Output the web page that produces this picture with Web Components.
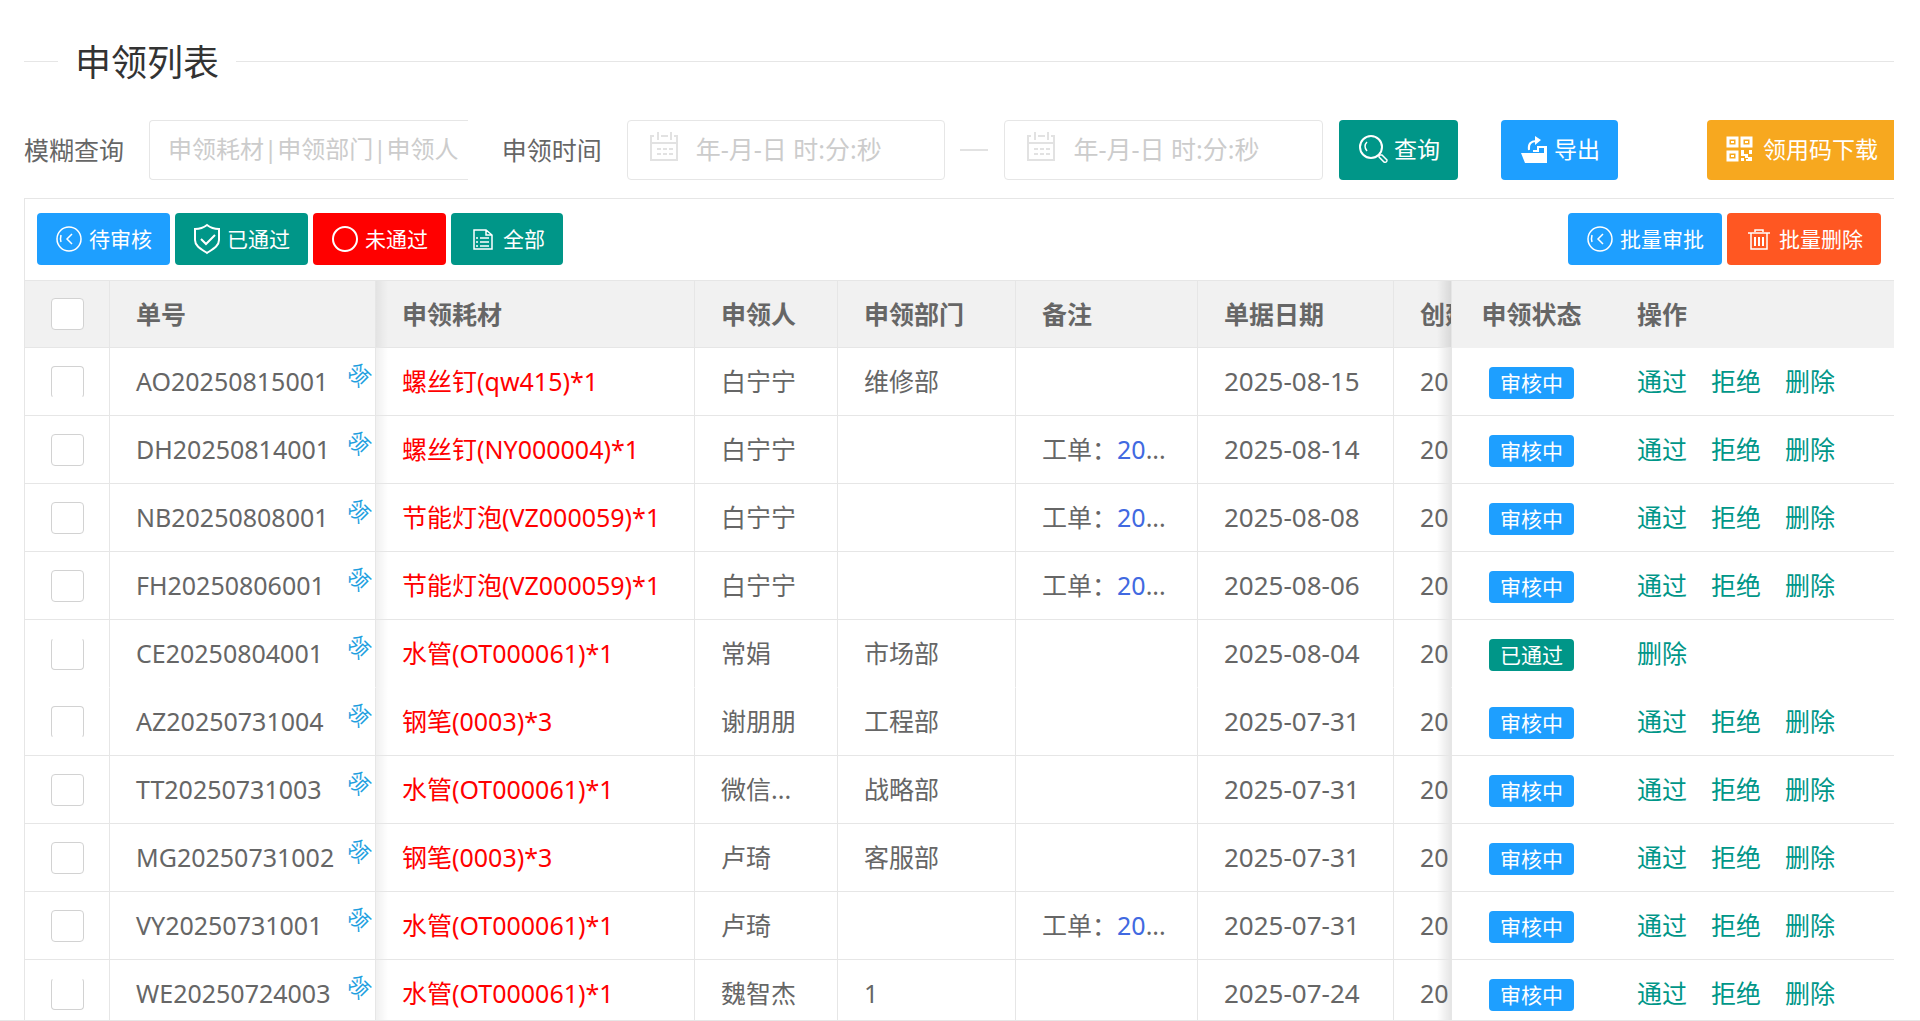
<!DOCTYPE html>
<html lang="zh-CN">
<head>
<meta charset="UTF-8">
<meta name="viewport" content="width=device-width, initial-scale=1.0">
<title>申领列表</title>
<style>
    body {
        margin: 0;
        background: #fff;
        color: #666;
        font: 25px/32px "Noto Sans", "Noto Sans CJK SC", sans-serif;
    }
</style>
</head>
<body>
<requisition-page></requisition-page>

<script>
const ICONS = {
    back: `<circle cx="13" cy="13" r="12"/><path d="M16 8l-5 5 5 5M5 9q-1 4 0 7"/>`,
    shield: `<path stroke-width="2" d="M13-1q5 4 12 4v11c0 6-6 9-12 13C7 23 1 20 1 14V3q7 0 12-4zM7 13l5 5 9-9"/>`,
    circle: `<circle cx="13" cy="13" r="12" stroke-width="2"/>`,
    doc: `<path d="M4 4h12l6 5v14H4zM16 4v5h6M10 12h9M10 16h9M10 20h9M6 12h2M6 16h2M6 20h2"/>`,
    search: `<circle cx="12" cy="12" r="11" stroke-width="2"/><path d="M8 16q-4-5 0-9M20 20l3 0 5 5q0 3-3 2l-5-5z"/>`,
    share: `<path fill="currentColor" stroke="none" d="M0 17h23V10h3v17H4zM14 0l6 4-6 5z"/><path stroke-width="2" d="M8 14c-1-6 2-9 7-9M12 15h5v-4h8v8"/>`,
    qrcode: `<path stroke-width="3" d="M1 2h9v8H1zM15 2h9v8h-9zM1 16h9v8H1z"/><path fill="currentColor" stroke="none" d="M4 5h3v2H4zM18 5h3v2h-3zM4 19h3v2H4zM14 14h3v4h4v4h-3v-2h-4zM22 14h3v4h-3zM14 22h3v3h-3zM21 21h4v4h-6v-2h2z"/>`,
    trash: `<path d="M2 7h22M9 6V4h8v2M5 7v16h16V7"/><path stroke-width="2" d="M9 11v9M13 11v9M17 11v9"/>`,
    date: `<path stroke-width="2" d="M4 4H1v24h26V4h-3M11 4h7M1 11h26M8 0v8M21 0v8"/><path stroke-width="2" stroke-dasharray="4 2" d="M7 17h16M7 22h16"/>`
};

const ROWS = [
    { no: "AO20250815001", goods: "螺丝钉(qw415)*1", user: "白宁宁", dept: "维修部", date: "2025-08-15", edge: "no-bottom" },
    { no: "DH20250814001", goods: "螺丝钉(NY000004)*1", user: "白宁宁", order: true, date: "2025-08-14" },
    { no: "NB20250808001", goods: "节能灯泡(VZ000059)*1", user: "白宁宁", order: true, date: "2025-08-08" },
    { no: "FH20250806001", goods: "节能灯泡(VZ000059)*1", user: "白宁宁", order: true, date: "2025-08-06" },
    { no: "CE20250804001", goods: "水管(OT000061)*1", user: "常娟", dept: "市场部", date: "2025-08-04", passed: true, edge: "no-top" },
    { no: "AZ20250731004", goods: "钢笔(0003)*3", user: "谢朋朋", dept: "工程部", date: "2025-07-31", edge: "no-bottom" },
    { no: "TT20250731003", goods: "水管(OT000061)*1", user: "微信...", dept: "战略部", date: "2025-07-31" },
    { no: "MG20250731002", goods: "钢笔(0003)*3", user: "卢琦", dept: "客服部", date: "2025-07-31" },
    { no: "VY20250731001", goods: "水管(OT000061)*1", user: "卢琦", order: true, date: "2025-07-31" },
    { no: "WE20250724003", goods: "水管(OT000061)*1", user: "魏智杰", dept: "1", date: "2025-07-24", edge: "no-top" }
];

class AppIcon extends HTMLElement {
    constructor() {
        super();
        this.attachShadow({ mode: "open" });
    }

    connectedCallback() {
        this.shadowRoot.innerHTML = `
        <style>
            :host { display: block; flex: none; width: 26px; height: 26px; }
            svg { display: block; width: 100%; height: 100%; overflow: visible; }
        </style>
        <svg viewBox="0 0 ${this.getAttribute("box") || "26 26"}" fill="none" stroke="currentColor" stroke-width="1.500" aria-hidden="true">${ICONS[this.getAttribute("name")]}</svg>`;
    }
}

class AppButton extends HTMLElement {
    constructor() {
        super();
        this.attachShadow({ mode: "open" }).innerHTML = `
        <style>
            :host { display: block; flex: none; }
            button {
                display: flex;
                align-items: center;
                gap: 7px;
                height: 60px;
                padding: 0 18px 2px 20px;
                border: 0;
                border-radius: 4px;
                background: var(--btn, #009688);
                color: #fff;
                font: inherit;
                font-size: 23px;
                white-space: nowrap;
                cursor: pointer;
            }
            :host([small]) button { height: 52px; padding: 0 18px 0 19px; font-size: 21px; }
            :host([flush]) button { border-radius: 4px 0 0 4px; padding-right: 16px; gap: 10px; }
            button:hover { opacity: 0.8; }
        </style>
        <button type="button"><slot name="icon"></slot><slot></slot></button>`;
    }
}

class TextField extends HTMLElement {
    constructor() {
        super();
        this.attachShadow({ mode: "open" });
    }

    connectedCallback() {
        const icon = this.getAttribute("icon");
        this.shadowRoot.innerHTML = `
        <style>
            :host { display: flex; align-items: center; min-width: 0; }
            label { flex: none; width: 125px; }
            .box {
                flex: 1;
                min-width: 0;
                display: flex;
                box-sizing: border-box;
                height: 60px;
                border: 1px solid #e6e6e6;
                border-radius: 4px;
            }
            :host([cut]) .box { border-right: 0; border-radius: 4px 0 0 4px; }
            :host([cut]) input { font-size: 24px; }
            app-icon { width: 28px; height: 28px; margin: 11px 0 0 22px; color: #e2e2e2; }
            input {
                flex: 1;
                min-width: 0;
                padding: 0 0 2px 18px;
                border: 0;
                outline: 0;
                background: none;
                color: #666;
                font: inherit;
            }
            input::placeholder { color: #ccc; opacity: 1; }
        </style>
        ${this.hasAttribute("label") ? `<label for="field">${this.getAttribute("label")}</label>` : ""}
        <div class="box">
            ${icon ? `<app-icon name="${icon}" box="28 28"></app-icon>` : ""}
            <input id="field" type="text" placeholder="${this.getAttribute("placeholder")}" aria-label="${this.getAttribute("label") || "结束时间"}">
        </div>`;
    }
}

class SearchBar extends HTMLElement {
    constructor() {
        super();
        this.attachShadow({ mode: "open" }).innerHTML = `
        <style>
            :host { display: flex; align-items: center; }
            .keyword { flex: 443; }
            .start { flex: 443; margin-left: 34px; }
            .end { flex: 318; }
            .line { flex: none; width: 28px; height: 2px; margin: 0 16px 0 15px; background: #e2e2e2; }
            .query { margin-left: 16px; }
            .export { margin-left: 43px; }
            .code { margin-left: 89px; }
            .query app-icon { width: 28px; height: 28px; }
        </style>
        <text-field class="keyword" cut label="模糊查询" placeholder="申领耗材|申领部门|申领人"></text-field>
        <text-field class="start" icon="date" label="申领时间" placeholder="年-月-日 时:分:秒"></text-field>
        <span class="line"></span>
        <text-field class="end" icon="date" placeholder="年-月-日 时:分:秒"></text-field>
        <app-button class="query"><app-icon slot="icon" name="search" box="28 28"></app-icon>查询</app-button>
        <app-button class="export" style="--btn: #1e9fff"><app-icon slot="icon" name="share"></app-icon>导出</app-button>
        <app-button class="code" flush style="--btn: #f7a81f"><app-icon slot="icon" name="qrcode"></app-icon>领用码下载</app-button>`;
    }
}

class TableToolbar extends HTMLElement {
    constructor() {
        super();
        this.attachShadow({ mode: "open" }).innerHTML = `
        <style>
            :host { display: flex; gap: 5px; padding: 14px 13px 15px 12px; }
            .right { margin-left: auto; }
        </style>
        <app-button small style="--btn: #1e9fff"><app-icon slot="icon" name="back"></app-icon>待审核</app-button>
        <app-button small><app-icon slot="icon" name="shield"></app-icon>已通过</app-button>
        <app-button small style="--btn: #f00"><app-icon slot="icon" name="circle"></app-icon>未通过</app-button>
        <app-button small><app-icon slot="icon" name="doc"></app-icon>全部</app-button>
        <app-button small class="right" style="--btn: #1e9fff"><app-icon slot="icon" name="back"></app-icon>批量审批</app-button>
        <app-button small style="--btn: #ff5722"><app-icon slot="icon" name="trash"></app-icon>批量删除</app-button>`;
    }
}

class StatusBadge extends HTMLElement {
    constructor() {
        super();
        this.attachShadow({ mode: "open" }).innerHTML = `
        <style>
            :host {
                display: inline-block;
                padding: 0 11px;
                border-radius: 4px;
                background: #1e9fff;
                color: #fff;
                font-size: 21px;
                line-height: 32px;
                vertical-align: middle;
            }
            :host([passed]) { background: #009688; }
        </style>
        <slot></slot>`;
    }
}

class RequisitionTable extends HTMLElement {
    constructor() {
        super();
        this.attachShadow({ mode: "open" });
    }

    connectedCallback() {
        this.render();
    }

    renderRow(row) {
        const ops = row.passed ? ["删除"] : ["通过", "拒绝", "删除"];
        return `
        <tr class="${row.passed ? "no-line" : ""}">
            <td class="check"><input type="checkbox" class="${row.edge || ""}" aria-label="${row.no}"></td>
            <td class="no">${row.no}<span class="mark">领</span></td>
            <td class="goods">${row.goods}</td>
            <td>${row.user}</td>
            <td>${row.dept || ""}</td>
            <td>${row.order ? `工单：<a href="#">20</a>...` : ""}</td>
            <td class="date">${row.date}</td>
            <td class="created">20</td>
            <td class="state"><status-badge ${row.passed ? "passed" : ""}>${row.passed ? "已通过" : "审核中"}</status-badge></td>
            <td class="ops"><div>${ops.map(op => `<a href="#">${op}</a>`).join("")}</div></td>
        </tr>`;
    }

    render() {
        this.shadowRoot.innerHTML = `
        <style>
            :host { display: block; }
            table { width: 100%; table-layout: fixed; border-collapse: separate; border-spacing: 0; }
            th, td {
                box-sizing: border-box;
                height: 68px;
                padding: 0 0 2px 26px;
                border: solid #e6e6e6;
                border-width: 0 1px 1px 0;
                text-align: left;
                white-space: nowrap;
                overflow: hidden;
            }
            th { padding-bottom: 0; border-top-width: 1px; background: #f1f1f1; font-weight: 700; }
            .no-line td { border-bottom-color: transparent; }
            .check { padding: 0; text-align: center; }
            input {
                appearance: none;
                box-sizing: border-box;
                display: block;
                width: 33px;
                height: 32px;
                margin: 0 auto;
                border: 1px solid #d2d2d2;
                border-radius: 4px;
                background: #fff;
            }
            .no-bottom { border-bottom-color: transparent; }
            .no-top { border-top-color: transparent; }
            .no { position: relative; }
            .mark {
                position: absolute;
                top: 15px;
                right: 5px;
                width: 22px;
                color: #1e9fdf;
                font-size: 22px;
                line-height: 22px;
                transform: rotate(45deg);
            }
            .goods { color: #f00; }
            .date { font-size: 26px; }
            a { color: #4169e1; text-decoration: none; }
            th.goods { color: inherit; }
            .goods { background-image: linear-gradient(90deg, rgba(0, 0, 0, 0.06), transparent 12px); }
            .created { background-image: linear-gradient(270deg, rgba(0, 0, 0, 0.1), transparent 14px); }
            .state { padding: 0; border-right: 0; text-align: center; }
            .ops { border-right: 0; }
            th.state, th.ops { border-bottom-color: transparent; }
            .ops div { display: flex; gap: 24px; }
            .ops a { color: #009688; }
        </style>
        <table>
            <colgroup>
                <col style="width: 85px"><col style="width: 266px"><col>
                <col style="width: 143px"><col style="width: 178px"><col style="width: 182px">
                <col style="width: 196px"><col style="width: 58px"><col style="width: 159px">
                <col style="width: 283px">
            </colgroup>
            <thead>
                <tr>
                    <th class="check"><input type="checkbox" aria-label="全选"></th>
                    <th>单号</th>
                    <th class="goods">申领耗材</th>
                    <th>申领人</th>
                    <th>申领部门</th>
                    <th>备注</th>
                    <th>单据日期</th>
                    <th class="created">创建</th>
                    <th class="state">申领状态</th>
                    <th class="ops">操作</th>
                </tr>
            </thead>
            <tbody>${ROWS.map(row => this.renderRow(row)).join("")}</tbody>
        </table>`;
    }
}

class RequisitionPage extends HTMLElement {
    constructor() {
        super();
        this.attachShadow({ mode: "open" }).innerHTML = `
        <style>
            :host {
                display: block;
                box-sizing: border-box;
                height: 100vh;
                padding: 35px 26px 0 24px;
                border-bottom: 1px solid #e6e6e6;
                overflow: hidden;
            }
            header { display: flex; align-items: center; gap: 17px; color: #333; }
            header::before, header::after { content: ""; height: 1px; background: #e6e6e6; }
            header::before { width: 34px; }
            header::after { flex: 1; }
            h1 { margin: 0; padding-top: 4px; font-size: 36px; font-weight: 400; line-height: 48px; }
            search-bar { margin: 33px 0 18px; }
            section { border: solid #e6e6e6; border-width: 1px 0 0 1px; }
        </style>
        <header><h1>申领列表</h1></header>
        <search-bar></search-bar>
        <section>
            <table-toolbar></table-toolbar>
            <requisition-table></requisition-table>
        </section>`;
    }
}

customElements.define("app-icon", AppIcon);
customElements.define("app-button", AppButton);
customElements.define("text-field", TextField);
customElements.define("search-bar", SearchBar);
customElements.define("table-toolbar", TableToolbar);
customElements.define("status-badge", StatusBadge);
customElements.define("requisition-table", RequisitionTable);
customElements.define("requisition-page", RequisitionPage);
</script>
</body>
</html>
